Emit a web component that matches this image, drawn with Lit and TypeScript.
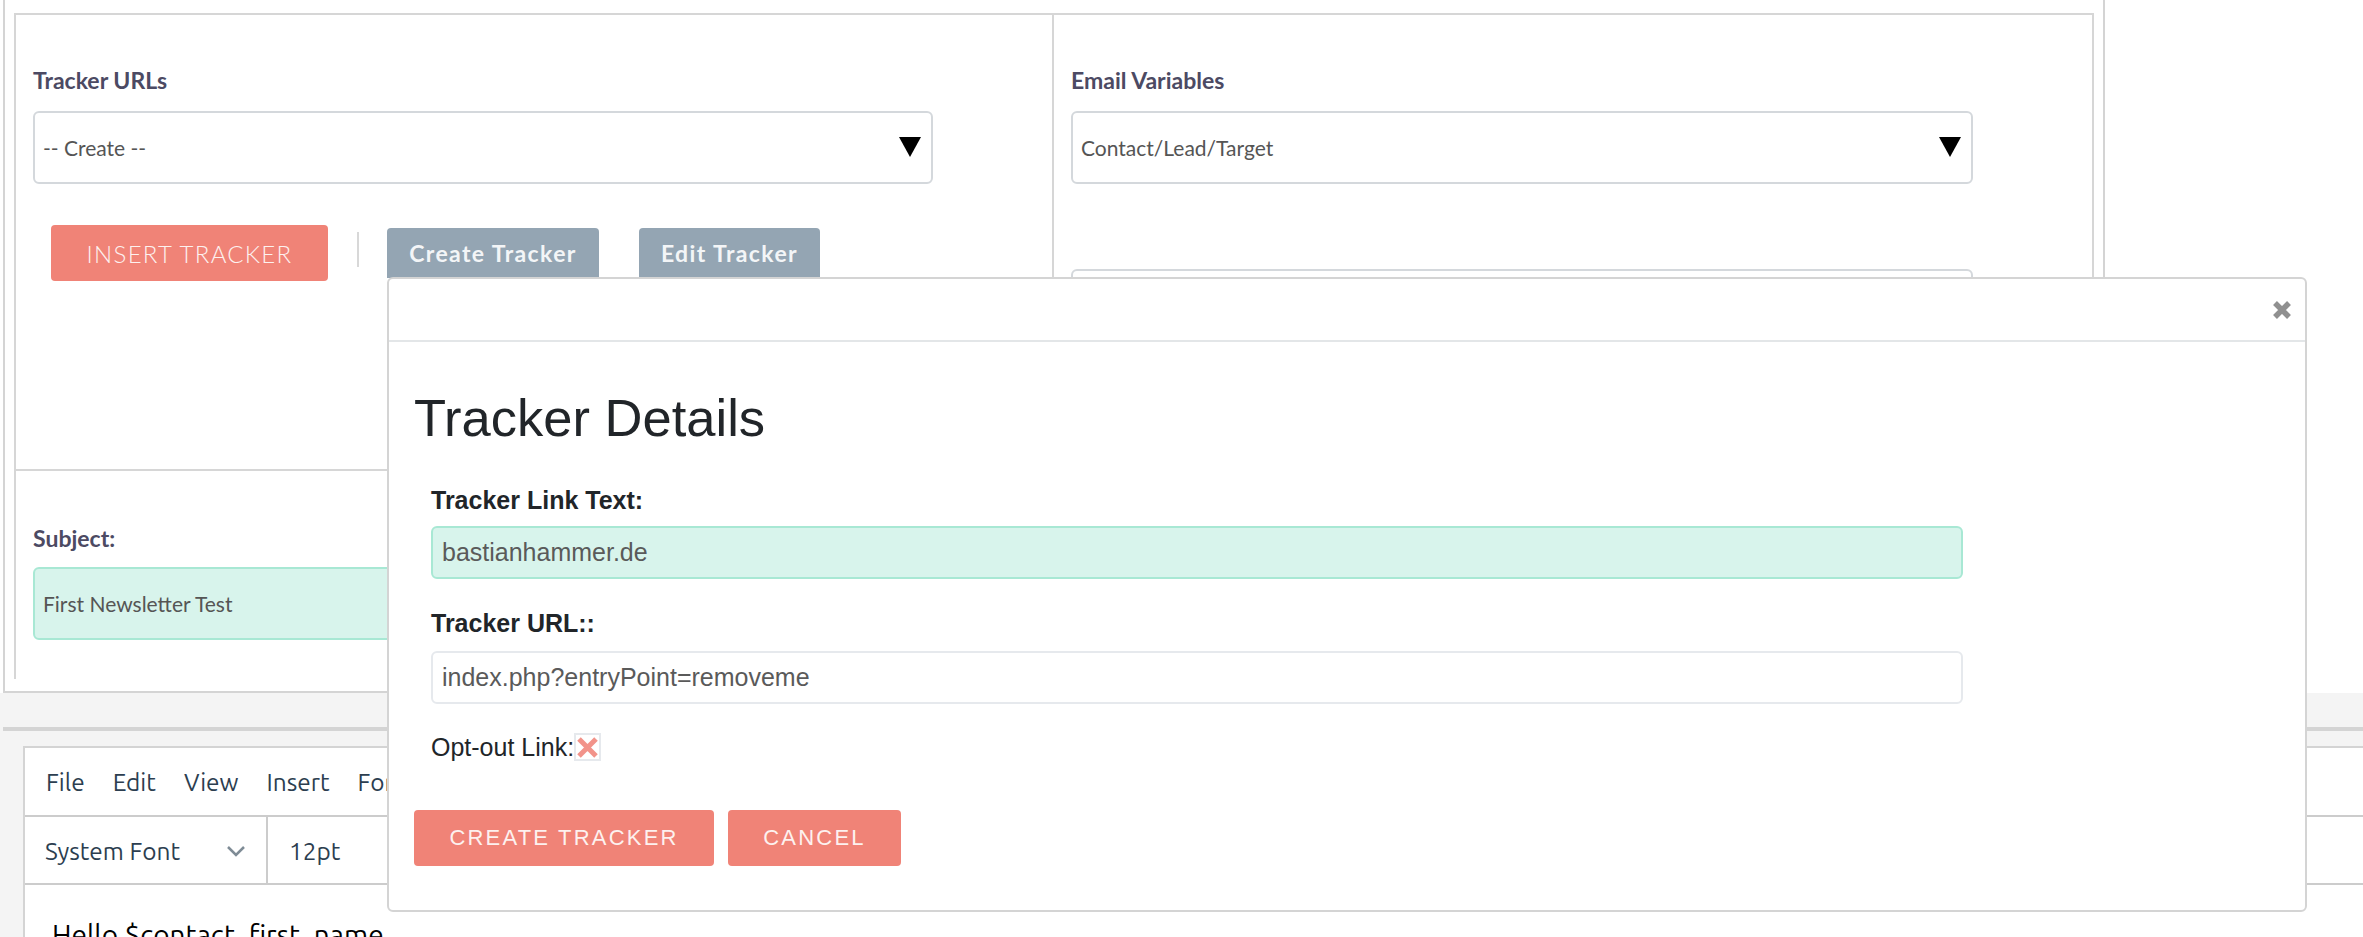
import { LitElement, html, css } from "lit";
import { customElement } from "lit/decorators.js";

@customElement("app-root")
export class AppRoot extends LitElement {
  static styles = css`
    :host { display: block; position: relative; width: 2363px; height: 937px; overflow: hidden; background: #fff; font-family: Lato, sans-serif; }
    * { box-sizing: border-box; }
    .panel { width: 2102px; height: 693px; margin-left: 3px; border: 2px solid #d4d4d4; border-top: 0; padding: 13px 9px 0 9px; background: #fff; }
    .table { height: 666px; border: 2px solid #d6d6d6; border-bottom: 0; display: grid; grid-template-columns: 1038px 1fr; }
    .left { border-right: 2px solid #d6d6d6; display: flex; flex-direction: column; }
    .top-cell { height: 456px; border-bottom: 2px solid #d6d6d6; padding: 50px 0 0 17px; }
    .right { padding: 50px 0 0 17px; }
    .lbl { font-size: 23px; font-weight: 700; color: #4c4a63; line-height: 30px; }
    .select { height: 73px; margin-top: 16px; border: 2px solid #d4d8dc; border-radius: 6px; display: flex; align-items: center; justify-content: space-between; padding: 0 9px 0 8px; font-size: 21px; color: #555; }
    .select.a { width: 900px; }
    .select.b { width: 902px; }
    .tri { width: 0; height: 0; border-left: 11px solid transparent; border-right: 11px solid transparent; border-top: 20px solid #000; margin-right: 1px; margin-top: -2px; }
    .select.stub { margin-top: 85px; }
    .actions { display: flex; align-items: flex-start; margin: 41px 0 0 18px; }
    .btn { border: 0; border-radius: 4px; color: #fff; display: flex; align-items: center; justify-content: center; }
    .insert { width: 277px; height: 56px; background: #f08377; font-size: 24px; letter-spacing: 1.3px; font-weight: 300; color: #fdf1ef; }
    .sep { width: 2px; height: 35px; background: #d8d8d8; margin: 7px 28px 0 29px; }
    .grey { height: 50px; margin-top: 3px; background: #94a5b3; font-size: 23px; font-weight: 700; letter-spacing: 1.4px; border-radius: 4px 4px 0 0; color: #f3f5f7; }
    .g1 { width: 212px; margin-right: 40px; }
    .g2 { width: 181px; }
    .sub { padding: 52px 0 0 17px; }
    .field { height: 73px; margin-top: 14px; width: 900px; background: #d8f4ec; border: 2px solid #a8e8d4; border-radius: 6px; display: flex; align-items: center; padding-left: 8px; font-size: 21px; color: #555; }
    .lower { height: 244px; background: #f4f4f4; padding-top: 35px; position: relative; }
    .thick { position: absolute; left: 3px; right: 0; top: 34px; height: 4px; background: #d4d4d4; }
    .editor { margin: 18px 0 0 23px; height: 191px; background: #fff; border: 2px solid #d4d4d4; border-right: 0; border-bottom: 0; font-family: Ubuntu, "Noto Sans", sans-serif; color: #2c3e50; font-size: 24.4px; }
    .menubar { height: 69px; border-bottom: 2px solid #ccc; display: flex; align-items: center; padding-left: 21px; gap: 28px; }
    .toolbar { height: 68px; border-bottom: 2px solid #ccc; display: flex; align-items: stretch; padding-top: 1px; }
    .fontsel { width: 243px; margin-top: -1px; padding: 1px 20px 0 20px; border-right: 2px solid #ccc; display: flex; align-items: center; justify-content: space-between; }
    .size { padding-left: 21px; display: flex; align-items: center; }
    .body { padding: 34px 0 0 27px; color: #000; font-size: 28px; }
    .modal { position: absolute; left: 387px; top: 277px; width: 1920px; height: 635px; background: #fff; border: 2px solid #d4d4d4; border-radius: 6px; font-family: "Liberation Sans", Arial, sans-serif; color: #212529; }
    .mhead { height: 63px; border-bottom: 2px solid #e3e6e8; display: flex; align-items: center; justify-content: flex-end; padding-right: 13px; }
    .mbody { padding: 0 0 0 25px; }
    h1 { font-size: 52.5px; font-weight: 400; margin: 0; padding-top: 43px; line-height: 66px; color: #212529; }
    .form { padding-left: 17px; }
    .mlbl { font-size: 25px; font-weight: 700; line-height: 30px; }
    .mlbl.one { margin-top: 34px; }
    .mlbl.two { margin-top: 29px; }
    .inp { width: 1532px; height: 53px; border-radius: 6px; display: flex; align-items: center; padding-left: 9px; font-size: 25px; color: #5a5a5a; margin-top: 11px; }
    .inp.w { margin-top: 13px; }
    .inp.g { background: #d8f4ec; border: 2px solid #a8e8d4; }
    .inp.w { background: #fff; border: 2px solid #e6e9ed; }
    .opt { display: flex; align-items: center; font-size: 25px; margin-top: 28px; height: 30px; }
    .broken { width: 27px; height: 28px; border: 2px solid #e6e9ed; display: flex; align-items: center; justify-content: center; }
    .mact { display: flex; gap: 14px; margin-top: 48px; }
    .mbtn { height: 56px; background: #f08377; color: #fdf1ef; font-size: 22px; letter-spacing: 2.2px; border-radius: 4px; display: flex; align-items: center; justify-content: center; }
    .m1 { width: 300px; }
    .m2 { width: 173px; }
  `;

  render() {
    return html`
      <div class="panel">
        <div class="table">
          <div class="left">
            <div class="top-cell">
              <div class="lbl">Tracker URLs</div>
              <div class="select a"><span>-- Create --</span><span class="tri"></span></div>
              <div class="actions">
                <div class="btn insert">INSERT TRACKER</div>
                <div class="sep"></div>
                <div class="btn grey g1">Create Tracker</div>
                <div class="btn grey g2">Edit Tracker</div>
              </div>
            </div>
            <div class="sub">
              <div class="lbl">Subject:</div>
              <div class="field">First Newsletter Test</div>
            </div>
          </div>
          <div class="right">
            <div class="lbl">Email Variables</div>
            <div class="select b"><span>Contact/Lead/Target</span><span class="tri"></span></div>
            <div class="select b stub"></div>
          </div>
        </div>
      </div>
      <div class="lower">
        <div class="thick"></div>
        <div class="editor">
          <div class="menubar"><span>File</span><span>Edit</span><span>View</span><span>Insert</span><span>Format</span></div>
          <div class="toolbar">
            <div class="fontsel"><span>System Font</span>
              <svg width="20" height="12" viewBox="0 0 20 12"><path d="M2 2l8 8 8-8" fill="none" stroke="#7f8c96" stroke-width="2.5"/></svg>
            </div>
            <div class="size">12pt</div>
          </div>
          <div class="body">Hello $contact_first_name</div>
        </div>
      </div>
      <div class="modal">
        <div class="mhead">
          <svg width="20" height="20" viewBox="0 0 20 20"><path d="M3 3l14 14M17 3L3 17" stroke="#909090" stroke-width="5.500"/></svg>
        </div>
        <div class="mbody">
          <h1>Tracker Details</h1>
          <div class="form">
            <div class="mlbl one">Tracker Link Text:</div>
            <div class="inp g">bastianhammer.de</div>
            <div class="mlbl two">Tracker URL::</div>
            <div class="inp w">index.php?entryPoint=removeme</div>
            <div class="opt">Opt-out Link:<span class="broken"><svg width="23" height="23" viewBox="0 0 23 23"><path d="M3 3l17 17M20 3L3 20" stroke="#f2938a" stroke-width="5"/></svg></span></div>
          </div>
          <div class="mact">
            <div class="mbtn m1">CREATE TRACKER</div>
            <div class="mbtn m2">CANCEL</div>
          </div>
        </div>
      </div>
    `;
  }
}
